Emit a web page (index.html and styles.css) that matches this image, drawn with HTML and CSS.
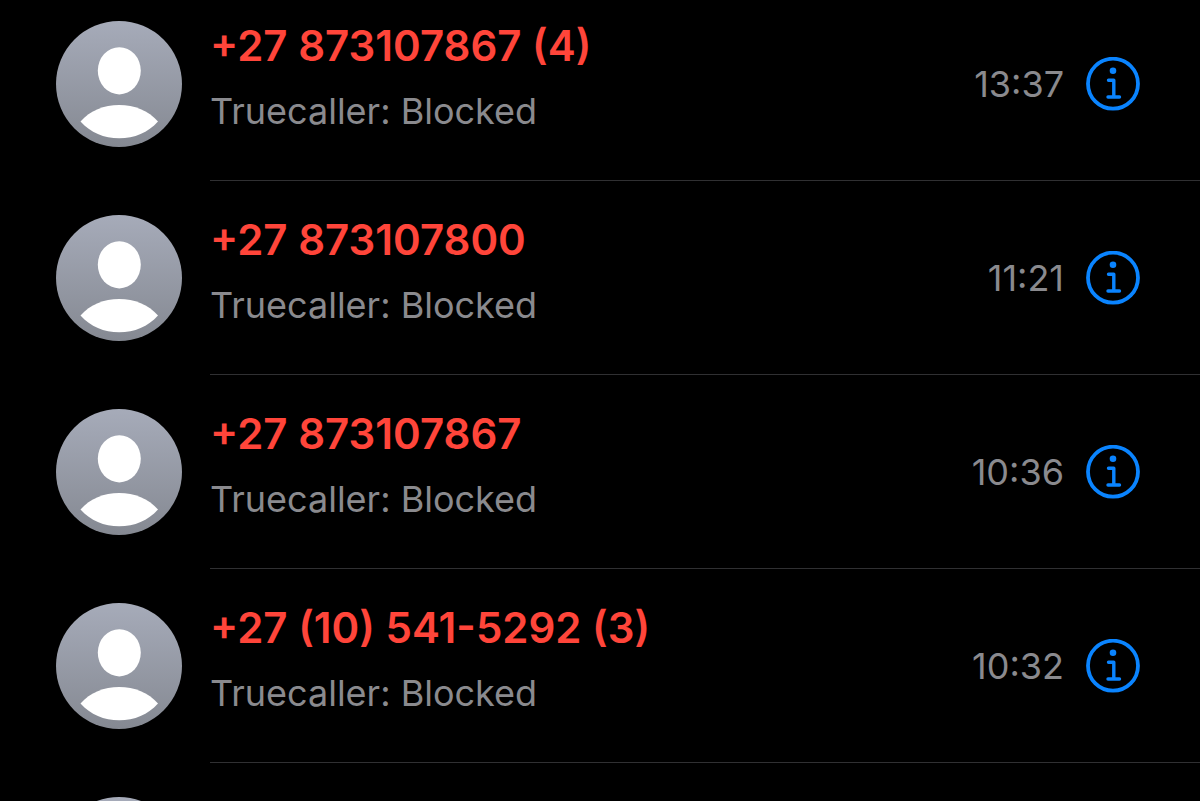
FILE: index.html
```html
<!DOCTYPE html>
<html lang="en">
<head>
  <meta charset="utf-8">
  <title>Recents</title>
  <meta name="viewport" content="width=device-width, initial-scale=1.0">
  <link rel="stylesheet" href="styles.css">
</head>
<body>

  <!-- shared icons -->
  <svg class="sprite" aria-hidden="true">
    <defs>
      <linearGradient id="avatar-bg" x1="0" y1="0" x2="0" y2="1">
        <stop offset="0" stop-color="#a6abb9" />
        <stop offset="1" stop-color="#858992" />
      </linearGradient>
    </defs>
    <symbol id="person" viewBox="0 0 126 126">
      <circle cx="63" cy="63" r="63" fill="url(#avatar-bg)" />
      <ellipse cx="63.300" cy="49.800" rx="21.500" ry="23.600" fill="#fff" />
      <path d="M24.500 100.500C34 89.500 48 84 63.200 84S92.500 89.500 102 100.500C92 111.500 78.500 117.300 63.200 117.300S34.500 111.500 24.500 100.500Z" fill="#fff" />
    </symbol>
    <symbol id="info" viewBox="0 0 54 54">
      <circle cx="27" cy="26.700" r="25" fill="none" stroke="#0a84ff" stroke-width="3.800" />
      <circle cx="27" cy="13.700" r="3.300" fill="#0a84ff" />
      <path d="M22.500 23.300H27.800V40M22 40H33.500" fill="none" stroke="#0a84ff" stroke-width="3.400" stroke-linecap="round" stroke-linejoin="round" />
    </symbol>
  </svg>

  <main>
    <ul class="calls">
      <li class="call">
        <svg class="avatar" aria-hidden="true"><use href="#person" /></svg>
        <div class="details">
          <div class="caller">
            <div class="number">+27 873107867 (4)</div>
            <div class="label">Truecaller: Blocked</div>
          </div>
          <time class="time">13:37</time>
          <button class="info" type="button" aria-label="Info"><svg aria-hidden="true"><use href="#info" /></svg></button>
        </div>
      </li>
      <li class="call">
        <svg class="avatar" aria-hidden="true"><use href="#person" /></svg>
        <div class="details">
          <div class="caller">
            <div class="number">+27 873107800</div>
            <div class="label">Truecaller: Blocked</div>
          </div>
          <time class="time">11:21</time>
          <button class="info" type="button" aria-label="Info"><svg aria-hidden="true"><use href="#info" /></svg></button>
        </div>
      </li>
      <li class="call">
        <svg class="avatar" aria-hidden="true"><use href="#person" /></svg>
        <div class="details">
          <div class="caller">
            <div class="number">+27 873107867</div>
            <div class="label">Truecaller: Blocked</div>
          </div>
          <time class="time">10:36</time>
          <button class="info" type="button" aria-label="Info"><svg aria-hidden="true"><use href="#info" /></svg></button>
        </div>
      </li>
      <li class="call">
        <svg class="avatar" aria-hidden="true"><use href="#person" /></svg>
        <div class="details">
          <div class="caller">
            <div class="number">+27 (10) 541-5292 (3)</div>
            <div class="label">Truecaller: Blocked</div>
          </div>
          <time class="time">10:32</time>
          <button class="info" type="button" aria-label="Info"><svg aria-hidden="true"><use href="#info" /></svg></button>
        </div>
      </li>
      <li class="call">
        <svg class="avatar" aria-hidden="true"><use href="#person" /></svg>
      </li>
    </ul>
  </main>

</body>
</html>
```
FILE: styles.css
```css
*, *:before, *:after {
  box-sizing: border-box;
}

body {
  background: #000;
  font-family: Inter, Roboto, 'Liberation Sans', sans-serif;
  margin: 0;
}

main {
  height: 100vh;
  overflow: hidden;
}

.sprite {
  height: 0;
  position: absolute;
  width: 0;
}

.calls {
  list-style: none;
  margin: 0;
  padding: 0;
}

.call {
  display: flex;
  gap: 28px;
  padding: 34px 0 0 56px;
}

.call:first-child {
  padding-top: 21px;
}

.avatar {
  flex: none;
  height: 126px;
  width: 126px;
}

.details {
  align-items: center;
  border-bottom: 1px solid #303032;
  display: flex;
  flex: 1;
  padding: 0 60px 33px 0;
}

.caller {
  display: flex;
  flex: 1;
  flex-direction: column;
  gap: 15px;
  height: 126px;
}

.number {
  color: #ff453a;
  font-size: 42px;
  font-weight: 600;
  line-height: 50px;
}

.label {
  color: #8a8a8e;
  font-size: 36px;
  line-height: 50px;
}

.time {
  color: #8a8a8e;
  font-size: 36px;
}

.info {
  background: none;
  border: 0;
  cursor: pointer;
  height: 54px;
  margin-left: 22px;
  padding: 0;
  width: 54px;
}

.info svg {
  display: block;
  height: 54px;
  width: 54px;
}
```
